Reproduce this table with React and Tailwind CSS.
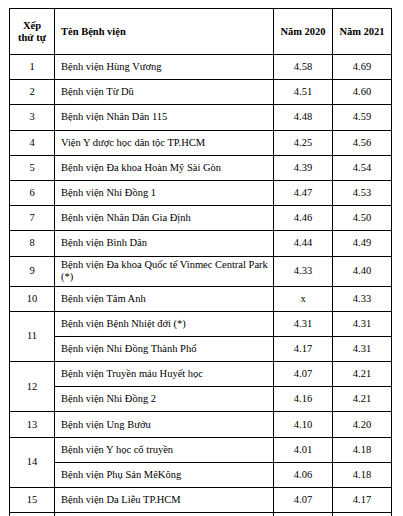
const rows = [
  { rank: "1", items: [["Bệnh viện Hùng Vương", "4.58", "4.69"]] },
  { rank: "2", items: [["Bệnh viện Từ Dũ", "4.51", "4.60"]] },
  { rank: "3", items: [["Bệnh viện Nhân Dân 115", "4.48", "4.59"]] },
  { rank: "4", items: [["Viện Y dược học dân tộc TP.HCM", "4.25", "4.56"]] },
  { rank: "5", items: [["Bệnh viện Đa khoa Hoàn Mỹ Sài Gòn", "4.39", "4.54"]] },
  { rank: "6", items: [["Bệnh viện Nhi Đồng 1", "4.47", "4.53"]] },
  { rank: "7", items: [["Bệnh viện Nhân Dân Gia Định", "4.46", "4.50"]] },
  { rank: "8", items: [["Bệnh viện Bình Dân", "4.44", "4.49"]] },
  { rank: "9", tall: true, items: [["Bệnh viện Đa khoa Quốc tế Vinmec Central Park (*)", "4.33", "4.40"]] },
  { rank: "10", items: [["Bệnh viện Tâm Anh", "x", "4.33"]] },
  {
    rank: "11",
    items: [
      ["Bệnh viện Bệnh Nhiệt đới (*)", "4.31", "4.31"],
      ["Bệnh viện Nhi Đồng Thành Phố", "4.17", "4.31"],
    ],
  },
  {
    rank: "12",
    items: [
      ["Bệnh viện Truyền máu Huyết học", "4.07", "4.21"],
      ["Bệnh viện Nhi Đồng 2", "4.16", "4.21"],
    ],
  },
  { rank: "13", items: [["Bệnh viện Ung Bướu", "4.10", "4.20"]] },
  {
    rank: "14",
    items: [
      ["Bệnh viện Y học cổ truyền", "4.01", "4.18"],
      ["Bệnh viện Phụ Sản MêKông", "4.06", "4.18"],
    ],
  },
  { rank: "15", items: [["Bệnh viện Da Liễu TP.HCM", "4.07", "4.17"]] },
  { rank: "", items: [["", "", ""]] },
];

const cell = "border border-black align-middle";

export default function App() {
  return (
    <div className="w-[403px] h-[516px] overflow-hidden bg-white pt-2 pl-[9px] font-['Liberation_Serif','Times_New_Roman',serif] text-[10.5px] leading-[12px] text-black">
      <table className="w-[382px] table-fixed border-collapse">
        <colgroup>
          <col className="w-[45px]" />
          <col className="w-[219px]" />
          <col className="w-[59px]" />
          <col className="w-[59px]" />
        </colgroup>
        <thead>
          <tr className="h-[46px] font-bold">
            <th className={`${cell} text-center`}>
              Xếp
              <br />
              thứ tự
            </th>
            <th className={`${cell} text-left pl-[6px]`}>Tên Bệnh viện</th>
            <th className={`${cell} text-center`}>Năm 2020</th>
            <th className={`${cell} text-center`}>Năm 2021</th>
          </tr>
        </thead>
        <tbody>
          {rows.map((r, i) =>
            r.items.map((it, j) => (
              <tr key={`${i}-${j}`} className={r.tall ? "h-[30px]" : "h-[25.2px]"}>
                {j === 0 && (
                  <td rowSpan={r.items.length} className={`${cell} text-center`}>
                    {r.rank}
                  </td>
                )}
                <td className={`${cell} pl-[6px] pr-1`}>{it[0]}</td>
                <td className={`${cell} text-center`}>{it[1]}</td>
                <td className={`${cell} text-center`}>{it[2]}</td>
              </tr>
            ))
          )}
        </tbody>
      </table>
    </div>
  );
}
